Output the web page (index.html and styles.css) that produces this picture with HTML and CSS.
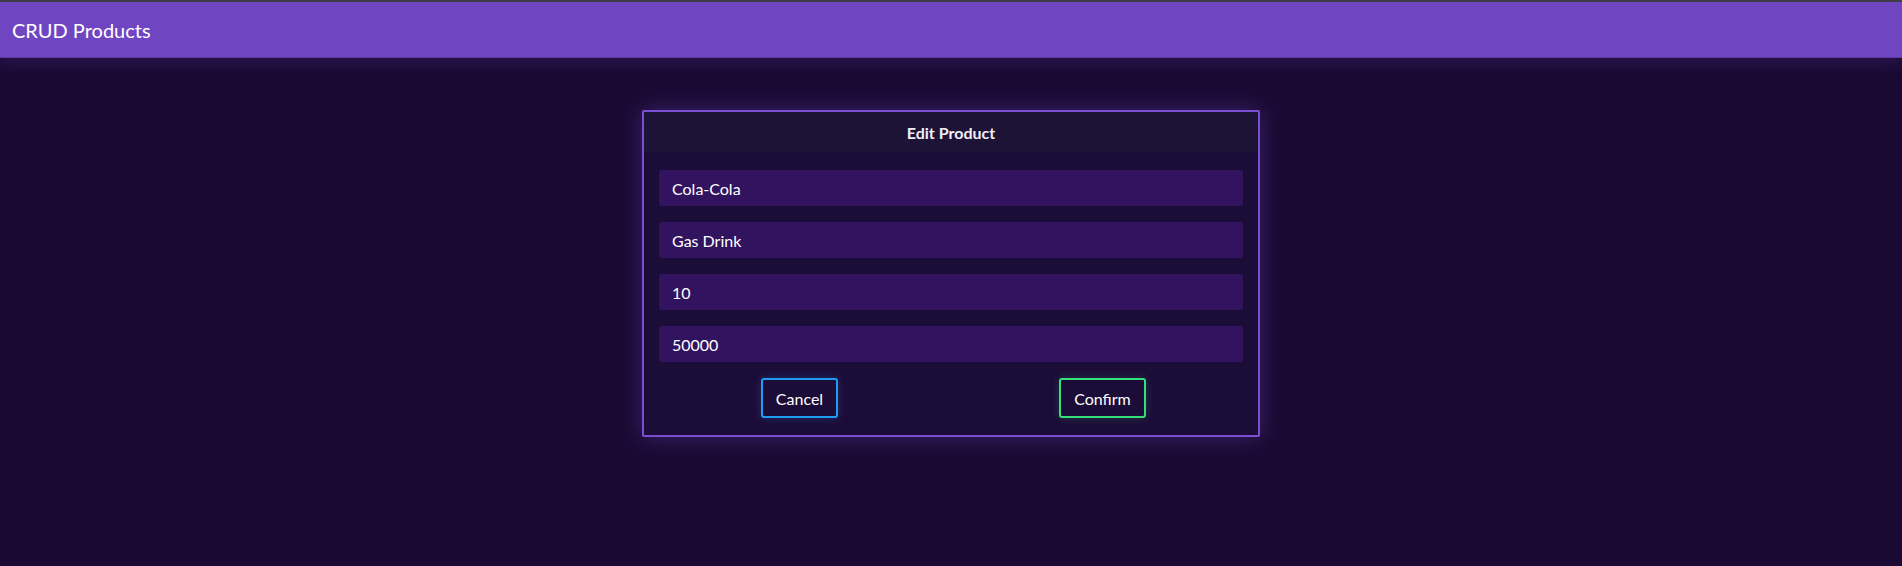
FILE: index.html
```html
<!DOCTYPE html>
<html lang="en">
<head>
<meta charset="utf-8">
<title>CRUD Products</title>
<link rel="stylesheet" href="styles.css">
</head>
<body>
<header class="topbar">
  <h1 class="brand">CRUD Products</h1>
</header>
<main class="page">
  <section class="modal">
    <div class="modal-header">Edit Product</div>
    <div class="modal-body">
      <input class="field" type="text" value="Cola-Cola">
      <input class="field" type="text" value="Gas Drink">
      <input class="field" type="text" value="10">
      <input class="field" type="text" value="50000">
    </div>
    <div class="modal-actions">
      <button class="btn btn-cancel">Cancel</button>
      <button class="btn btn-confirm">Confirm</button>
    </div>
  </section>
</main>
</body>
</html>
```
FILE: styles.css
```css
* { box-sizing: border-box; }
html, body { height: 100%; }
body {
  margin: 0;
  background: #1a0a33;
  color: #f4f1fa;
  font-family: Lato, "Open Sans", sans-serif;
  border-top: 2px solid #3b3f45;
}
.topbar {
  height: 56px;
  background: #7045c2;
  display: flex;
  align-items: center;
  padding: 0 12px;
  border-bottom: 1px solid #5b3a9e;
  box-shadow: 0 2px 18px rgba(112, 69, 194, 0.28);
  position: relative;
}
.brand {
  margin: 0;
  font-size: 20px;
  font-weight: 400;
  color: #ffffff;
}
.page {
  display: flex;
  justify-content: center;
  padding-top: 52px;
}
.modal {
  width: 618px;
  border: 2px solid #7b4fd1;
  border-radius: 2px;
  background: #1c0c38;
  box-shadow: 0 0 22px rgba(123, 79, 209, 0.35);
}
.modal-header {
  height: 40px;
  background: #1c1337;
  display: flex;
  align-items: center;
  justify-content: center;
  font-size: 16px;
  font-weight: 700;
  color: #f1eef8;
}
.modal-body {
  display: flex;
  flex-direction: column;
  gap: 16px;
  padding: 18px 15px 0;
}
.field {
  height: 36px;
  border: none;
  border-radius: 2px;
  background: #32135f;
  color: #ffffff;
  font-family: inherit;
  font-size: 16px;
  padding: 0 13px;
  outline: none;
}
.modal-actions {
  display: grid;
  grid-template-columns: 1fr 1fr;
  justify-items: center;
  padding: 16px 4px 17px;
}
.btn {
  height: 40px;
  padding: 0 13px;
  background: #1c0c38;
  color: #ffffff;
  font-family: inherit;
  font-size: 16px;
  border-radius: 3px;
  cursor: pointer;
}
.btn-cancel {
  border: 2px solid #1f9cf0;
  box-shadow: 0 0 10px rgba(31, 156, 240, 0.25);
}
.btn-confirm {
  border: 2px solid #35e07b;
  box-shadow: 0 0 10px rgba(53, 224, 123, 0.2);
}
```
